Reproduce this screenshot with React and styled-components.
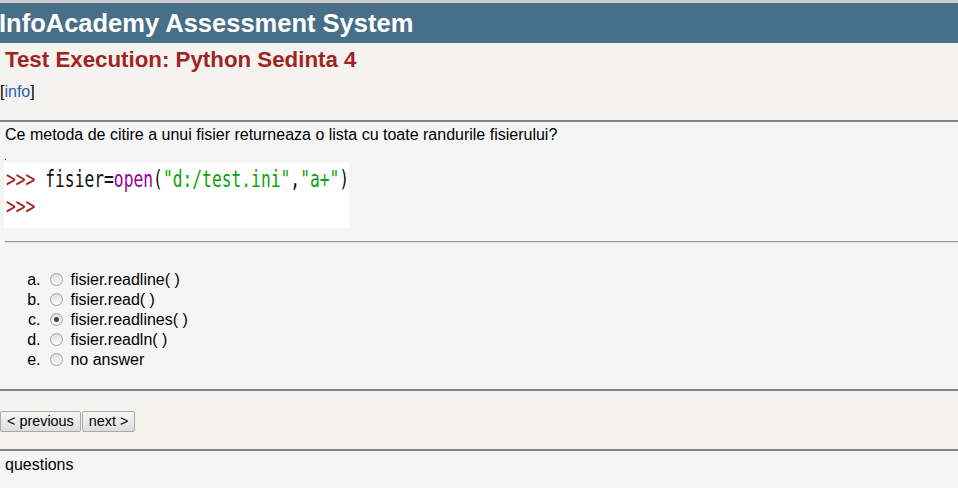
import React, { useState } from "react";
import styled, { createGlobalStyle } from "styled-components";

const GlobalStyle = createGlobalStyle`
  html, body {
    margin: 0;
    padding: 0;
    background: #f5f5f5;
    font-family: "Liberation Sans", Arial, sans-serif;
    font-size: 16px;
    color: #000;
  }
`;

const options = [
  "fisier.readline( )",
  "fisier.read( )",
  "fisier.readlines( )",
  "fisier.readln( )",
  "no answer",
];

const App = () => {
  const [selected, setSelected] = useState(2);

  return (
    <Page>
      <GlobalStyle />
      <TopBar>
        <AppTitle>InfoAcademy Assessment System</AppTitle>
      </TopBar>
      <HeadSection>
        <TestTitle>Test Execution: Python Sedinta 4</TestTitle>
        <InfoLine>
          [<InfoLink href="#">info</InfoLink>]
        </InfoLine>
      </HeadSection>
      <QuestionSection>
        <QuestionText>
          Ce metoda de citire a unui fisier returneaza o lista cu toate
          randurile fisierului?
        </QuestionText>
        <Dot />
        <CodeShot>
          <CodeLine>
            <Prompt>&gt;&gt;&gt;</Prompt> fisier=<Builtin>open</Builtin>(
            <Str>"d:/test.ini"</Str>,<Str>"a+"</Str>)
          </CodeLine>
          <CodeLine>
            <Prompt>&gt;&gt;&gt;</Prompt>
          </CodeLine>
        </CodeShot>
        <Rule />
        <Answers>
          {options.map((text, i) => (
            <Answer key={text}>
              <Radio
                type="radio"
                name="answer"
                checked={selected === i}
                onChange={() => setSelected(i)}
              />{" "}
              {text}
            </Answer>
          ))}
        </Answers>
      </QuestionSection>
      <NavSection>
        <NavButton>&lt; previous</NavButton>
        <NavButton>next &gt;</NavButton>
      </NavSection>
      <FooterSection>questions</FooterSection>
    </Page>
  );
};

export default App;

const Page = styled.div`
  width: 100%;
  min-height: 488px;
  border-top: 3px solid #cdcdcd;
  box-sizing: border-box;
`;

const TopBar = styled.div`
  height: 40px;
  background: #476f87;
  display: flex;
  align-items: center;
`;

const AppTitle = styled.div`
  color: #fff;
  font-weight: bold;
  font-size: 25.5px;
  margin-left: -1px;
  white-space: nowrap;
`;

const HeadSection = styled.div`
  background: #f4f3ef;
  height: 72px;
  border-bottom: 2px solid #858585;
  padding-top: 5px;
  box-sizing: content-box;
`;

const TestTitle = styled.div`
  color: #a12424;
  font-weight: bold;
  font-size: 22.3px;
  line-height: 24px;
  padding-left: 5px;
`;

const InfoLine = styled.div`
  margin-top: 10px;
  font-size: 16px;
  line-height: 20px;
`;

const InfoLink = styled.a`
  color: #2a5db0;
  text-decoration: none;
`;

const QuestionSection = styled.div`
  background: #f5f5f5;
  padding: 3px 0 19px;
  border-bottom: 2px solid #858585;
`;

const QuestionText = styled.div`
  padding-left: 5px;
  line-height: 20px;
`;

const Dot = styled.div`
  width: 1px;
  height: 1px;
  background: #555;
  margin: 14px 0 0 5px;
`;

const CodeShot = styled.div`
  background: #fff;
  width: 345px;
  height: 65px;
  margin: 3px 0 0 4px;
  padding: 3px 0 0 2px;
  box-sizing: border-box;
  font-family: "DejaVu Sans Mono", monospace;
  font-size: 23px;
  color: #111;
  overflow: hidden;
`;

const CodeLine = styled.div`
  line-height: 27px;
  white-space: pre;
  transform: scaleX(0.708);
  transform-origin: left center;
`;

const Prompt = styled.span`
  color: #a32020;
`;

const Builtin = styled.span`
  color: #9a009a;
`;

const Str = styled.span`
  color: #0ba20b;
`;

const Rule = styled.div`
  margin: 13px 0 0 5px;
  border-top: 1px solid #9a9a9a;
  border-bottom: 1px solid #e6e6e6;
`;

const Answers = styled.ol`
  list-style: lower-alpha;
  margin: 27px 0 0 5px;
  padding-left: 40px;
`;

const Answer = styled.li`
  line-height: 20px;
`;

const Radio = styled.input`
  appearance: none;
  width: 13px;
  height: 13px;
  margin: 3px 3px 0 5px;
  border-radius: 50%;
  border: 1px solid #a0a0a0;
  background: linear-gradient(#dedede, #fbfbfb);
  box-sizing: border-box;
  vertical-align: -1px;
  position: relative;

  &:checked::after {
    content: "";
    position: absolute;
    left: 3px;
    top: 3px;
    width: 5px;
    height: 5px;
    border-radius: 50%;
    background: #444;
  }
`;

const NavSection = styled.div`
  background: #f4f3ef;
  height: 60px;
  display: flex;
  align-items: center;
  border-bottom: 2px solid #858585;
  padding-top: 2px;
  box-sizing: border-box;
`;

const NavButton = styled.button`
  font-family: "Liberation Sans", Arial, sans-serif;
  font-size: 14.4px;
  height: 21px;
  padding: 0 6px;
  margin: 0 1px 0 0;
  background: linear-gradient(#f6f6f6, #dddddd);
  border: 1px solid #a9a9a9;
  border-radius: 2px;
  color: #000;
`;

const FooterSection = styled.div`
  padding: 5px 0 0 5px;
  line-height: 18px;
`;
